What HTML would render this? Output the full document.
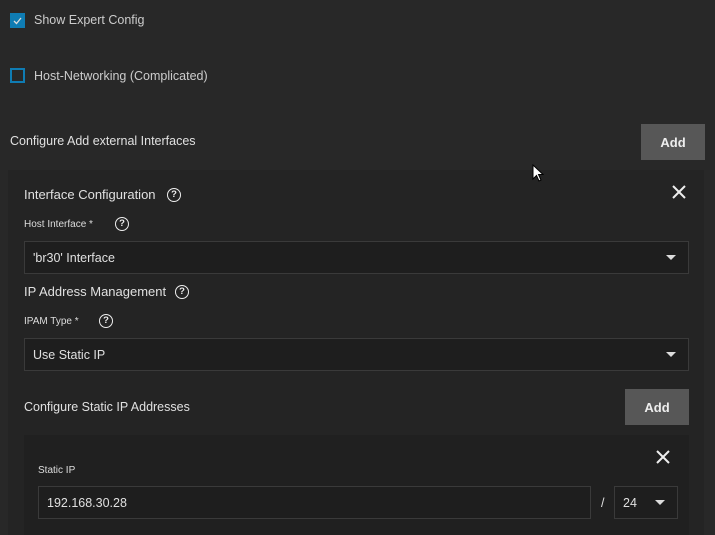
<!DOCTYPE html>
<html><head><style>
html,body{margin:0;width:715px;height:535px;overflow:hidden}
body{background:#282828;font-family:"Liberation Sans",sans-serif;color:#e0e0e0;position:relative}
.a{position:absolute}
.t{font-size:12.5px;line-height:14px;white-space:nowrap}
.s{font-size:10px;line-height:12px;white-space:nowrap;color:#ddd}
.cb{width:11px;height:11px;border:2px solid #0f7cb3}
.btn{background:#575757;color:#eee;font-weight:bold;font-size:13px;display:flex;align-items:center;justify-content:center}
.inp{background:#1e1e1e;border:1px solid #3a3a3a;box-sizing:border-box}
.q{width:12px;height:12px;border:1.6px solid #eee;border-radius:50%;font-size:9.5px;font-weight:bold;text-align:center;line-height:12px;color:#eee}
.arr{width:0;height:0;border-left:5px solid transparent;border-right:5px solid transparent;border-top:5px solid #ddd}
</style></head><body>
<div class="a cb" style="left:10px;top:13px;background:#0f7cb3"></div>
<svg class="a" style="left:11px;top:14px" width="13" height="13"><path d="M3 7 L5.5 9.5 L10 4" stroke="#ddd" stroke-width="1.3" fill="none"/></svg>
<div class="a t" style="left:34px;top:13px;color:#ccc">Show Expert Config</div>
<div class="a cb" style="left:10px;top:68px"></div>
<div class="a t" style="left:34px;top:69px;color:#ccc">Host-Networking (Complicated)</div>
<div class="a t" style="left:10px;top:134px">Configure Add external Interfaces</div>
<div class="a btn" style="left:641px;top:124px;width:64px;height:36px">Add</div>

<div class="a" style="left:8px;top:170px;width:696px;height:370px;background:#242424"></div>
<div class="a t" style="left:24px;top:188px;font-size:13px">Interface Configuration</div>
<div class="a q" style="left:167px;top:188px">?</div>
<svg class="a" style="left:671px;top:184px" width="16" height="16"><path d="M2 2L14 14M14 2L2 14" stroke="#eee" stroke-width="2"/></svg>
<div class="a s" style="left:24px;top:219px">Host Interface *</div>
<div class="a q" style="left:115px;top:217px">?</div>
<div class="a inp" style="left:24px;top:241px;width:665px;height:33px"></div>
<div class="a t" style="left:33px;top:251px">'br30' Interface</div>
<div class="a arr" style="left:666px;top:255px"></div>
<div class="a t" style="left:24px;top:285px;font-size:13px">IP Address Management</div>
<div class="a q" style="left:175px;top:285px">?</div>
<div class="a s" style="left:24px;top:316px">IPAM Type *</div>
<div class="a q" style="left:99px;top:314px">?</div>
<div class="a inp" style="left:24px;top:338px;width:665px;height:33px"></div>
<div class="a t" style="left:33px;top:348px">Use Static IP</div>
<div class="a arr" style="left:666px;top:352px"></div>
<div class="a t" style="left:24px;top:400px">Configure Static IP Addresses</div>
<div class="a btn" style="left:625px;top:389px;width:64px;height:36px">Add</div>

<div class="a" style="left:24px;top:435px;width:665px;height:110px;background:#202020"></div>
<svg class="a" style="left:655px;top:449px" width="16" height="16"><path d="M2 2L14 14M14 2L2 14" stroke="#eee" stroke-width="2"/></svg>
<div class="a s" style="left:38px;top:465px">Static IP</div>
<div class="a inp" style="left:38px;top:486px;width:553px;height:33px"></div>
<div class="a t" style="left:47px;top:496px">192.168.30.28</div>
<div class="a t" style="left:601px;top:496px">/</div>
<div class="a inp" style="left:614px;top:486px;width:64px;height:33px"></div>
<div class="a t" style="left:623px;top:496px">24</div>
<div class="a arr" style="left:655px;top:500px"></div>
<svg class="a" style="left:532px;top:164px" width="14" height="20"><path d="M1 1 L1 15 L4.5 11.5 L7 17 L9 16 L6.5 10.5 L11 10.5 Z" fill="#fff" stroke="#000" stroke-width="1"/></svg>
</body></html>
